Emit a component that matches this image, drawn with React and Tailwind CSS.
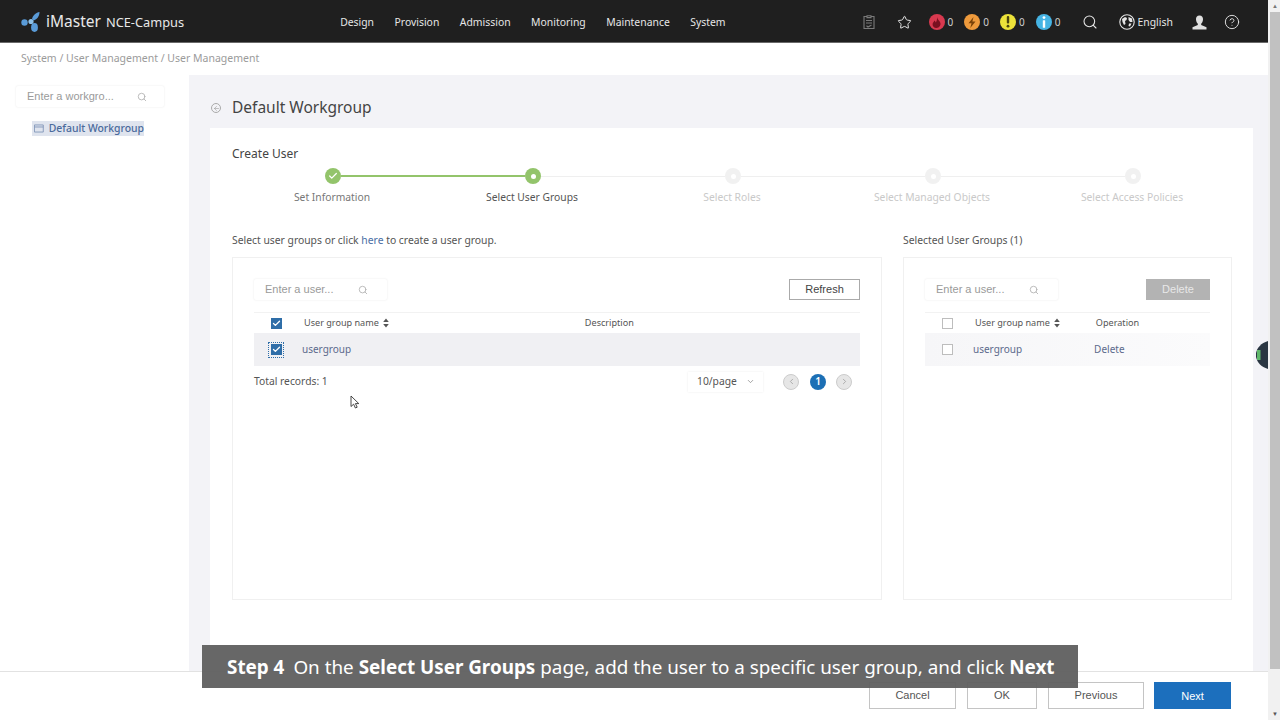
import React from "react";
import { Search, Star, CircleHelp, ChevronDown, ChevronLeft, ChevronRight, Check, ArrowLeft } from "lucide-react";

const Sort = () => (
  <svg width="6" height="10" viewBox="0 0 6 10" className="ml-1">
    <path d="M3 0.5 L5.8 4 H0.2 Z M3 9.5 L5.8 6 H0.2 Z" fill="#555" />
  </svg>
);

const Box = ({ on }) => (
  on ? (
    <span className="flex w-[11px] h-[11px] items-center justify-center bg-[#2f6ea8]">
      <Check size={9} color="#fff" strokeWidth={3.5} />
    </span>
  ) : (
    <span className="block w-[11px] h-[11px] border border-[#bdbdbd] bg-white" />
  )
);

const SearchBox = ({ text, w, iconGap }) => (
  <div className={`flex items-center h-[21px] ${w} rounded-[2px] shadow-[0_0_2px_rgba(0,0,0,0.10)] bg-white pl-[11px] font-['Liberation_Sans',sans-serif] text-[11px] text-[#9a9a9a]`}>
    <span>{text}</span>
    <Search size={10} color="#b0b0b0" className={iconGap} />
  </div>
);

const Alert = ({ color, children, gap }) => (
  <div className={`flex items-center ${gap}`}>
    <span className="flex w-[16px] h-[16px] rounded-full items-center justify-center" style={{ background: color }}>{children}</span>
    <span className="ml-[3px] text-[10px] text-[#cfcfcf]">0</span>
  </div>
);

const Step = ({ state }) => {
  if (state === "done") return (
    <span className="flex shrink-0 w-[16px] h-[16px] rounded-full bg-[#93c46b] items-center justify-center">
      <Check size={10} color="#fff" strokeWidth={3} />
    </span>
  );
  if (state === "cur") return (
    <span className="flex shrink-0 w-[16px] h-[16px] rounded-full bg-[#93c46b] items-center justify-center">
      <span className="w-[5px] h-[5px] rounded-full bg-white" />
    </span>
  );
  return (
    <span className="flex shrink-0 w-[16px] h-[16px] rounded-full bg-[#f1f1f1] items-center justify-center">
      <span className="w-[5px] h-[5px] rounded-full bg-white" />
    </span>
  );
};

const Btn = ({ w, children, primary }) => (
  <button className={`${w} h-[27px] text-[11px] font-['Liberation_Sans',sans-serif] ${primary ? "bg-[#1c6fbd] text-white" : "border border-[#c4c4c4] text-[#555] bg-white"}`}>{children}</button>
);

export default function App() {
  return (
    <div className="relative flex w-[1280px] h-[720px] overflow-hidden bg-white font-['Noto_Sans',sans-serif]">
      <div className="flex flex-col w-[1268px] h-full">
        <header className="flex items-center h-[43px] shrink-0 bg-[#1f1f1f] border-b border-[#6a6a6a] pl-[21px] pt-[2px] text-[#e8e8e8]">
          <svg width="20" height="22" viewBox="0 0 20 22" className="-mt-[1px]">
            <circle cx="3.5" cy="11.5" r="3.2" fill="#5a9bd8" />
            <circle cx="10" cy="10.5" r="2.6" fill="#8cc0e8" />
            <path d="M11 8 C12 4 15 1.5 18.5 1 C18.5 5 16 8.5 12.5 9.5 Z" fill="#5a9bd8" />
            <ellipse cx="13.5" cy="16.5" rx="3.4" ry="4.4" fill="#5a9bd8" />
          </svg>
          <span className="ml-[5px] text-[15.5px] leading-none">iMaster</span>
          <span className="ml-[5px] text-[12.8px] leading-none">NCE-Campus</span>
          <nav className="flex ml-[156px] mt-[1px] gap-[20.5px] text-[10.4px] text-[#e6e6e6]">
            <span>Design</span><span>Provision</span><span>Admission</span><span>Monitoring</span><span>Maintenance</span><span>System</span>
          </nav>
          <svg width="14" height="15" viewBox="0 0 14 15" fill="none" stroke="#7a7a7a" strokeWidth="1.1" className="ml-[136px]">
            <path d="M5 1.5 H2 V13.5 H12 V1.5 H9" />
            <path d="M5 .8 H9 V2.6 H5 Z M4 5.5 H10 M4 8 H10 M4.5 10.8 L6 12 L9.5 10" />
          </svg>
          <Star size={15} color="#e6e6e6" strokeWidth={1.6} className="ml-[21px]" />
          <Alert color="#d8394f" gap="ml-[17px]">
            <svg width="9" height="11" viewBox="0 0 9 11"><path d="M5 0 C5.5 3 9 4.5 8.5 7.5 C8 10 6 11 4.3 11 C2 11 0.3 9.3 0.6 7 C0.8 5.5 2 4.8 2.3 3.5 C3.3 4 3.6 4.8 3.6 5.6 C4.8 4.3 5.3 2 5 0 Z" fill="#7a1020" /></svg>
          </Alert>
          <Alert color="#ee9a3c" gap="ml-[11px]">
            <svg width="8" height="11" viewBox="0 0 8 11"><path d="M5.5 0 L0.5 6.2 H3.5 L2.3 11 L7.5 4.4 H4.4 Z" fill="#7a4208" /></svg>
          </Alert>
          <Alert color="#ece23a" gap="ml-[11px]">
            <svg width="4" height="12" viewBox="0 0 4 12"><rect x="0.8" y="0" width="2.4" height="7.5" rx="1" fill="#4a4510" /><circle cx="2" cy="10.2" r="1.4" fill="#4a4510" /></svg>
          </Alert>
          <Alert color="#46b4e4" gap="ml-[11px]">
            <svg width="4" height="12" viewBox="0 0 4 12"><circle cx="2" cy="1.6" r="1.4" fill="#fff" /><rect x="0.8" y="4.2" width="2.4" height="7.6" rx="0.6" fill="#fff" /></svg>
          </Alert>
          <Search size={16} color="#e6e6e6" strokeWidth={1.6} className="ml-[21px]" />
          <svg width="16" height="16" viewBox="0 0 16 16" className="ml-[21px]">
            <circle cx="8" cy="8" r="7.2" fill="none" stroke="#e6e6e6" strokeWidth="1.1" />
            <path d="M3 5 L6 3 L8 4 L7.5 6 L6 7 L6.5 10 L5 11 L3.5 8 Z M9.5 3 L13 4.5 L13.5 8 L11 8 L9.5 6 Z M10 9.5 L12.5 9.5 L11 12.5 L9.5 12 Z" fill="#e6e6e6" />
          </svg>
          <span className="ml-[3px] mt-[1px] text-[10.4px] text-[#e6e6e6]">English</span>
          <svg width="15" height="15" viewBox="0 0 15 15" className="ml-[19px]">
            <path d="M7.5 .5 C10 .5 11.2 2.4 11 4.8 C10.8 6.6 10 8 9.2 8.8 V10 L14.5 12.2 V14.5 H.5 V12.2 L5.8 10 V8.8 C5 8 4.2 6.6 4 4.8 C3.8 2.4 5 .5 7.5 .5 Z" fill="#e0e0e0" />
          </svg>
          <CircleHelp size={16} color="#e6e6e6" strokeWidth={1.4} className="ml-[17px]" />
        </header>

        <div className="flex items-center h-[32px] shrink-0 pl-[21px] text-[10.5px] text-[#9b9b9b]">System / User Management / User Management</div>

        <div className="flex flex-1 min-h-0">
          <aside className="w-[189px] shrink-0 pl-[16px] pt-[11px]">
            <SearchBox text="Enter a workgro..." w="w-[148px]" iconGap="ml-[23px]" />
            <div className="flex mt-[14px] ml-[16px] w-[112px] h-[15px] items-center bg-[#dfe4ee] pl-[2px] text-[10.4px] font-medium whitespace-nowrap text-[#4a6a9c]">
              <svg width="11" height="9" viewBox="0 0 11 9" fill="none" stroke="#7f95b8" strokeWidth="1"><path d="M.5 .5 H10.5 V8.5 H.5 Z M.5 2.8 H10.5" /></svg>
              <span className="ml-[5px]">Default Workgroup</span>
            </div>
          </aside>

          <main className="flex-1 flex flex-col bg-[#f3f3f7] pl-[21px] pr-[15px] min-w-0">
            <div className="flex items-center h-[53px] shrink-0 pt-[13px]">
              <span className="flex items-center justify-center ml-px w-[10px] h-[10px] rounded-full border border-[#aaa]"><ArrowLeft size={7} color="#999" /></span>
              <span className="ml-[11px] text-[15.5px] text-[#444]">Default Workgroup</span>
            </div>
            <section className="flex-1 bg-white pl-[22px] min-h-0">
              <div className="pt-[16px] text-[12px] leading-[20px] text-[#444]">Create User</div>
              <div className="flex items-center ml-[93px] mt-[4px] w-[816px]">
                <Step state="done" />
                <span className="flex-1 h-[2px] bg-[#93c46b]" />
                <Step state="cur" />
                <span className="flex-1 h-px bg-[#efefef]" />
                <Step />
                <span className="flex-1 h-px bg-[#efefef]" />
                <Step />
                <span className="flex-1 h-px bg-[#efefef]" />
                <Step />
              </div>
              <div className="grid grid-cols-5 w-[1000px] mt-[5px] text-[10.3px] leading-[16px] text-center text-[#c9c9c9]">
                <span className="text-[#777]">Set Information</span>
                <span className="text-[#555]">Select User Groups</span>
                <span>Select Roles</span>
                <span>Select Managed Objects</span>
                <span>Select Access Policies</span>
              </div>
              <div className="flex mt-[27px] text-[10.35px] leading-[16px] text-[#555]">
                <span className="w-[671px]">Select user groups or click <span className="text-[#4a6fa5]">here</span> to create a user group.</span>
                <span>Selected User Groups (1)</span>
              </div>
              <div className="flex gap-[21px] mt-[9px]">
                <div className="w-[650px] h-[343px] border border-[#f0f0f0] px-[21px] pt-[21px]">
                  <div className="flex items-center justify-between">
                    <SearchBox text="Enter a user..." w="w-[133px]" iconGap="ml-[25px]" />
                    <button className="w-[71px] h-[21px] border border-[#aaa] text-[11px] text-[#444] font-['Liberation_Sans',sans-serif]">Refresh</button>
                  </div>
                  <div className="flex items-center h-[21px] mt-[12px] border-t border-[#f2f2f2] text-[9.1px] text-[#555]">
                    <span className="flex w-[50px] justify-center -translate-x-[3px]"><Box on /></span>
                    <span className="flex items-center">User group name<Sort /></span>
                    <span className="ml-[196px]">Description</span>
                  </div>
                  <div className="flex items-center h-[33px] bg-[#f0f0f3] text-[10px] text-[#5c6a8c]">
                    <span className="flex w-[48px] justify-center -translate-x-[2px]">
                      <span className="flex w-[16px] h-[16px] items-center justify-center border border-dotted border-[#2f6ea8]"><Box on /></span>
                    </span>
                    <span>usergroup</span>
                  </div>
                  <div className="flex items-center justify-between h-[31px] text-[10.3px] text-[#555]">
                    <span>Total records: 1</span>
                    <div className="flex items-center">
                      <div className="flex items-center w-[75px] h-[20px] shadow-[0_0_2px_rgba(0,0,0,0.08)] pl-[9px] text-[#555]">10/page<ChevronDown size={9} color="#888" className="ml-[9px]" /></div>
                      <span className="flex ml-[20px] w-[16px] h-[16px] rounded-full items-center justify-center bg-[#e6e6e6] border border-[#ccc]"><ChevronLeft size={9} color="#999" /></span>
                      <span className="flex ml-[11px] w-[16px] h-[16px] rounded-full items-center justify-center bg-[#1c6fb5] text-white text-[10px] font-semibold">1</span>
                      <span className="flex ml-[10px] w-[16px] h-[16px] rounded-full items-center justify-center bg-[#e6e6e6] border border-[#ccc]"><ChevronRight size={9} color="#999" /></span>
                      <span className="w-[8px]" />
                    </div>
                  </div>
                </div>

                <div className="w-[329px] h-[343px] border border-[#f0f0f0] px-[21px] pt-[21px]">
                  <div className="flex items-center justify-between">
                    <SearchBox text="Enter a user..." w="w-[133px]" iconGap="ml-[25px]" />
                    <button className="w-[64px] h-[21px] bg-[#b3b3b3] text-[11px] text-[#e8e8e8] font-['Liberation_Sans',sans-serif]">Delete</button>
                  </div>
                  <div className="flex items-center h-[21px] mt-[12px] border-t border-[#f2f2f2] text-[9.1px] text-[#555]">
                    <span className="flex w-[50px] justify-center -translate-x-[3px]"><Box /></span>
                    <span className="flex items-center">User group name<Sort /></span>
                    <span className="ml-[36px]">Operation</span>
                  </div>
                  <div className="flex items-center h-[33px] bg-gradient-to-r from-[#f6f6f8] to-[#fbfbfc] text-[10px] text-[#5c6a8c]">
                    <span className="flex w-[48px] justify-center -translate-x-[2px]"><Box /></span>
                    <span>usergroup</span>
                    <span className="ml-[72px]">Delete</span>
                  </div>
                </div>
              </div>
            </section>
          </main>
        </div>

        <footer className="flex items-center justify-end gap-[11px] h-[49px] shrink-0 bg-white border-t border-[#e2e2e2] pr-[37px] pb-[1px]">
          <Btn w="w-[87px]">Cancel</Btn>
          <Btn w="w-[70px]">OK</Btn>
          <Btn w="w-[96px]">Previous</Btn>
          <span className="-ml-px"><Btn w="w-[77px]" primary>Next</Btn></span>
        </footer>
      </div>

      <div className="flex flex-col w-[12px] h-full bg-[#f1f1f1] pl-[2px]">
        <div className="flex h-[12px] items-center justify-center text-[6px] text-[#777]">▲</div>
        <div className="w-[10px] h-[657px] bg-[#c1c1c1]" />
        <div className="flex-1" />
        <div className="flex h-[12px] items-center justify-center text-[6px] text-[#555]">▼</div>
      </div>

      <div className="absolute left-[202px] top-[645px] flex items-center w-[876px] h-[43px] pl-[25px] pt-[1px] bg-[#5f5f5f]/95 text-[18.85px] text-white">
        <span className="font-bold">Step 4</span>
        <span className="ml-[9px]">On the <b>Select User Groups</b> page, add the user to a specific user group, and click <b>Next</b></span>
      </div>

      <svg width="12" height="28" viewBox="0 0 12 28" className="absolute left-[1256px] top-[341px]">
        <path d="M12 0 L12 28 C5 26 1 21 0 16 L0 12 C1 7 5 2 12 0 Z" fill="#2a3642" />
        <rect x="1" y="9" width="3.5" height="10" fill="#5fb86a" />
      </svg>

      <svg width="10" height="14" viewBox="0 0 10 14" className="absolute left-[350px] top-[395px]">
        <path d="M1 1 V11.5 L3.6 9.2 L5.4 13 L7.2 12.2 L5.4 8.6 H8.8 Z" fill="#fff" stroke="#333" strokeWidth="0.9" />
      </svg>
    </div>
  );
}
